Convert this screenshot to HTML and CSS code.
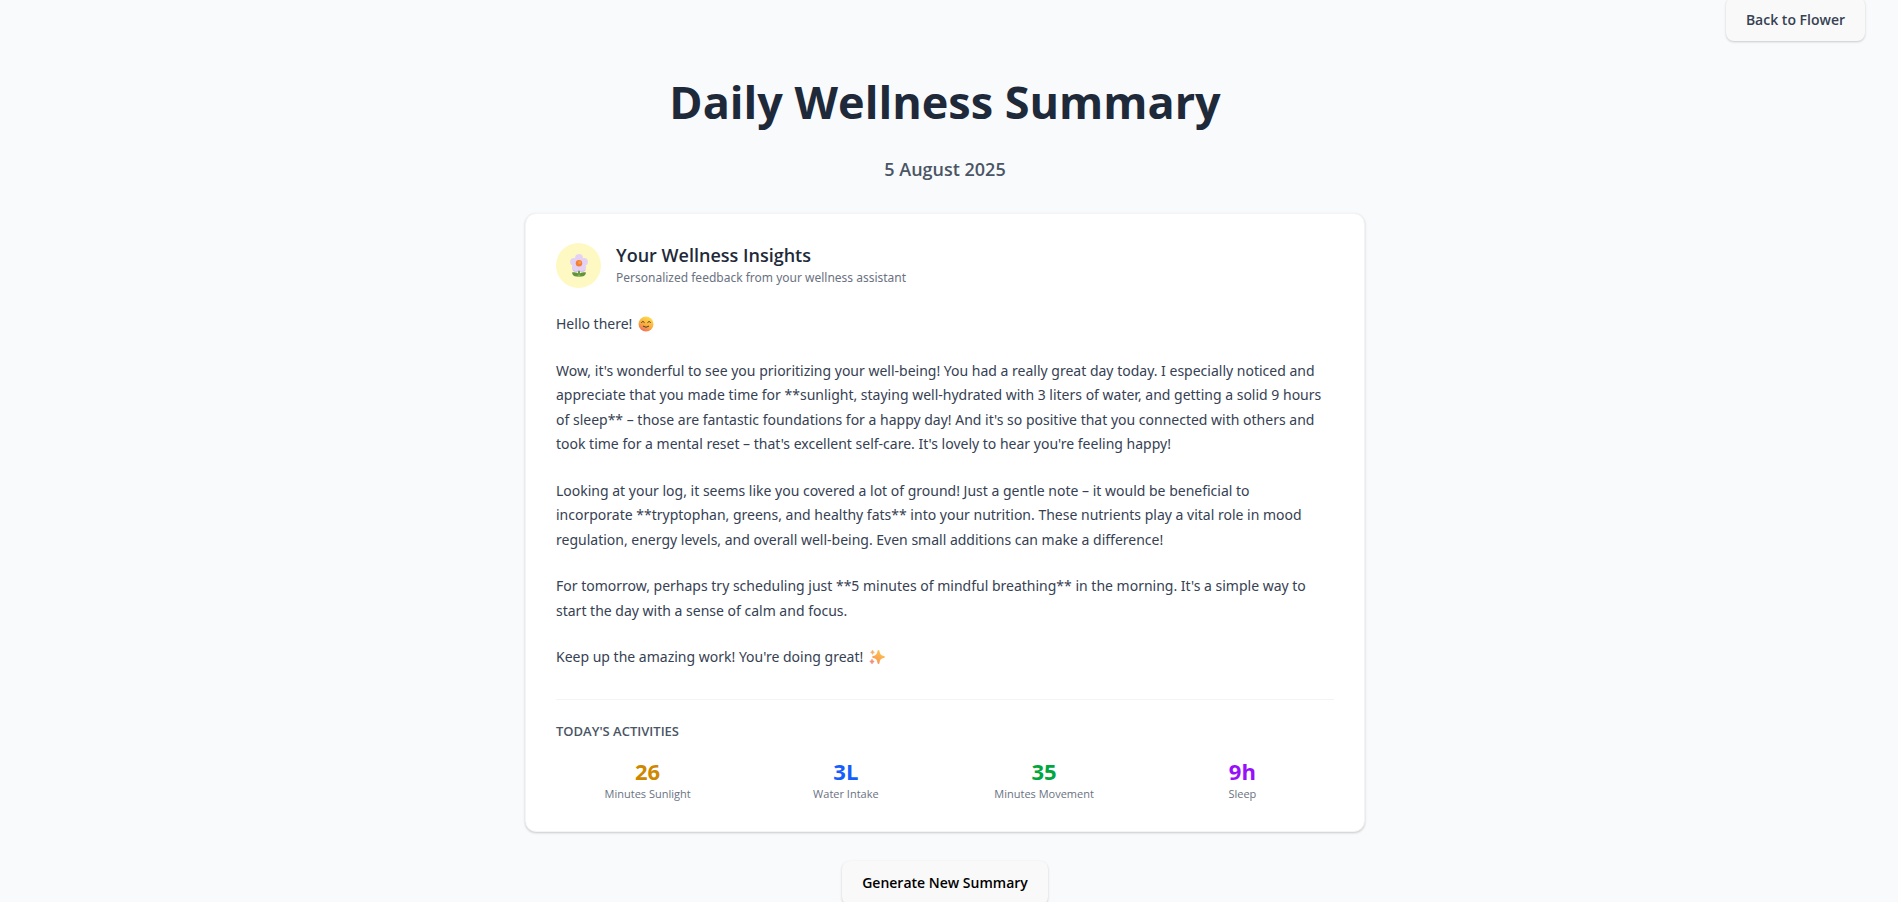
FILE: index.html
```html
<!DOCTYPE html>
<html lang="en">
<head>
<meta charset="utf-8">
<meta name="viewport" content="width=device-width, initial-scale=1">
<title>Daily Wellness Summary</title>
<link rel="stylesheet" href="styles.css">
</head>
<body>
<div class="page">
  <header class="topbar">
    <button class="button button-back" type="button">Back to Flower</button>
  </header>
  <main class="content">
    <h1 class="title">Daily Wellness Summary</h1>
    <p class="date">5 August 2025</p>
    <section class="card">
      <div class="card-head">
        <div class="avatar">
          <svg class="flower" viewBox="0 0 18 23" aria-hidden="true">
            <path d="M8 15h2v6H8z" fill="#6b9b45"/>
            <path d="M2 18.500c3-.8 5.500 0 7 2 1.500-2 4-2.800 7-2-.3 2.600-2 4-4.500 4h-5C4 22.500 2.300 21 2 18.500z" fill="#5f9440"/>
            <path d="M9 20l2 2.500H7z" fill="#86b54e"/>
            <g fill="#e3d2f6">
              <circle cx="9" cy="4" r="3.900"/>
              <circle cx="14" cy="7.800" r="3.900"/>
              <circle cx="12.200" cy="13.700" r="3.900"/>
              <circle cx="5.800" cy="13.700" r="3.900"/>
              <circle cx="4" cy="7.800" r="3.900"/>
              <circle cx="9" cy="10" r="5"/>
            </g>
            <path d="M3 16c2 2.200 5 1.800 6 0 1 1.800 4 2.200 6 0" fill="none" stroke="#cdb9ea"/>
            <circle cx="9" cy="9.300" r="3.200" fill="#f47f35"/>
            <circle cx="9.600" cy="8.600" r="1.500" fill="#fb9a4c"/>
          </svg>
        </div>
        <div>
          <h2 class="card-title">Your Wellness Insights</h2>
          <p class="card-subtitle">Personalized feedback from your wellness assistant</p>
        </div>
      </div>
      <div class="message">
        <p>Hello there! <svg class="emoji" viewBox="0 0 16 16" role="img" aria-label="Smiling face">
          <defs><linearGradient id="face" x1=".8" y1="0" x2=".3" y2="1"><stop offset="0" stop-color="#ffe04d"/><stop offset=".6" stop-color="#f9ac3c"/><stop offset="1" stop-color="#ef6b61"/></linearGradient></defs>
          <circle cx="8" cy="8" r="7.500" fill="url(#face)"/>
          <path d="M3.500 6.300q1.400-2 2.800 0M9.700 6.300q1.400-2 2.800 0M5.300 10.300q2.700 2.200 5.400 0" fill="none" stroke="#4e3942" stroke-width="1" stroke-linecap="round"/>
        </svg></p>
        <p>Wow, it's wonderful to see you prioritizing your well-being! You had a really great day today. I especially noticed and appreciate that you made time for **sunlight, staying well-hydrated with 3 liters of water, and getting a solid 9 hours of sleep** – those are fantastic foundations for a happy day! And it's so positive that you connected with others and took time for a mental reset – that's excellent self-care. It's lovely to hear you're feeling happy!</p>
        <p>Looking at your log, it seems like you covered a lot of ground! Just a gentle note – it would be beneficial to<br> incorporate **tryptophan, greens, and healthy fats** into your nutrition. These nutrients play a vital role in mood regulation, energy levels, and overall well-being. Even small additions can make a difference!</p>
        <p>For tomorrow, perhaps try scheduling just **5 minutes of mindful breathing** in the morning. It's a simple way to start the day with a sense of calm and focus.</p>
        <p>Keep up the amazing work! You're doing great! <svg class="emoji" viewBox="0 0 16 16" role="img" aria-label="Sparkles">
          <defs><linearGradient id="spark" x1=".8" y1="0" x2=".2" y2="1"><stop offset="0" stop-color="#ffc84f"/><stop offset=".6" stop-color="#fba84f"/><stop offset="1" stop-color="#f58a6e"/></linearGradient></defs>
          <path d="M9.500 1q.8 0 1.100 1.400c.5 3 1.300 3.800 4.300 4.500q1.200.4 1.100 1.100t-1.100 1c-3 .6-3.800 1.500-4.300 4.500Q10.300 15 9.500 15t-1.100-1.500C7.900 10.500 7.100 9.600 4.100 9 3.400 8.800 3 8.500 3 8s.4-.8 1.100-1.100c3-.7 3.800-1.500 4.300-4.500Q8.700 1 9.500 1z" fill="url(#spark)"/>
          <path d="M3.500 1q.5 1.700 2 2.300-1.500.5-2 2.200-.5-1.700-2-2.200 1.500-.6 2-2.300z" fill="#f9ad68" stroke="#f9ad68" stroke-width=".5"/>
          <path d="M3 10q.6 2 2.300 2.500Q3.600 13.200 3 15q-.6-1.800-2.300-2.500Q2.400 12 3 10z" fill="#f58a78" stroke="#f58a78" stroke-width=".5"/>
        </svg></p>
      </div>
      <div class="activities">
        <h3 class="activities-title">TODAY'S ACTIVITIES</h3>
        <div class="stats">
          <div class="stat"><div class="value sun">26</div><div class="label">Minutes Sunlight</div></div>
          <div class="stat"><div class="value water">3L</div><div class="label">Water Intake</div></div>
          <div class="stat"><div class="value move">35</div><div class="label">Minutes Movement</div></div>
          <div class="stat"><div class="value sleep">9h</div><div class="label">Sleep</div></div>
        </div>
      </div>
    </section>
    <button class="button" type="button">Generate New Summary</button>
  </main>
</div>
</body>
</html>
```
FILE: styles.css
```css
* { box-sizing: border-box; margin: 0; padding: 0; }
html { scrollbar-width: none; }
body {
  font-family: "Segoe UI", "Noto Sans", "Open Sans", sans-serif;
  background: #f9fafb;
  color: #1e2939;
}
.page { padding: 0 8px 24px 0; }
.topbar { display: flex; justify-content: flex-end; height: 41px; padding-right: 25px; }
.button {
  height: 44px;
  padding: 1px 20px 0;
  border: 0;
  border-radius: 8px;
  background: #f9f9f9;
  box-shadow: 0 1px 3px rgba(0, 0, 0, 0.1), 0 1px 2px rgba(0, 0, 0, 0.1);
  font: 600 14px/22px "Segoe UI", "Open Sans", sans-serif;
  color: #000;
  cursor: pointer;
}
.button-back { margin-top: -3px; color: #364153; }
.content {
  display: flex;
  flex-direction: column;
  align-items: center;
  padding: 29px 24px 0;
}
.title {
  font: 700 45px/64px "Segoe UI", "Open Sans", sans-serif;
  text-align: center;
}
.date { margin-top: 21px; font: 600 18px/28px "Segoe UI", "Open Sans", sans-serif; color: #4a5565; }
.card {
  width: 100%;
  max-width: 840px;
  margin: 30px 0 29px;
  padding: 29px 30px;
  border: 1px solid #f3f4f6;
  border-radius: 11px;
  background: #fff;
  box-shadow: 0 1px 3px rgba(0, 0, 0, 0.1), 0 1px 2px rgba(0, 0, 0, 0.1);
}
.card-head { display: flex; align-items: center; gap: 15px; margin-bottom: 24px; }
.avatar {
  display: flex;
  flex: none;
  align-items: center;
  justify-content: center;
  width: 45px;
  height: 45px;
  border-radius: 50%;
  background: #fef9c2;
}
.flower { width: 18px; height: 23px; }
.card-title { font: 600 18px/24px "Segoe UI", "Open Sans", sans-serif; }
.card-subtitle { font-size: 12px; line-height: 21px; color: #6a7282; }
.message { display: grid; gap: 22px; font-size: 14px; line-height: 1.75; color: #364153; }
.emoji { width: 16px; height: 16px; margin-left: 2px; vertical-align: -3px; }
.activities { margin-top: 29px; padding-top: 21px; border-top: 1px solid #f3f4f6; }
.activities-title { font: 600 13px/20px "Segoe UI", "Open Sans", sans-serif; color: #4a5565; }
.stats { display: grid; grid-template-columns: repeat(4, 1fr); gap: 15px; margin-top: 16px; }
.stat { text-align: center; }
.value { font: 700 22px/28px "Segoe UI", "Open Sans", sans-serif; }
.label { font: 11px/17px "Segoe UI", "Open Sans", sans-serif; color: #6a7282; }
.sun { color: #d08700; }
.water { color: #155dfc; }
.move { color: #00a63e; }
.sleep { color: #9810fa; }
```
